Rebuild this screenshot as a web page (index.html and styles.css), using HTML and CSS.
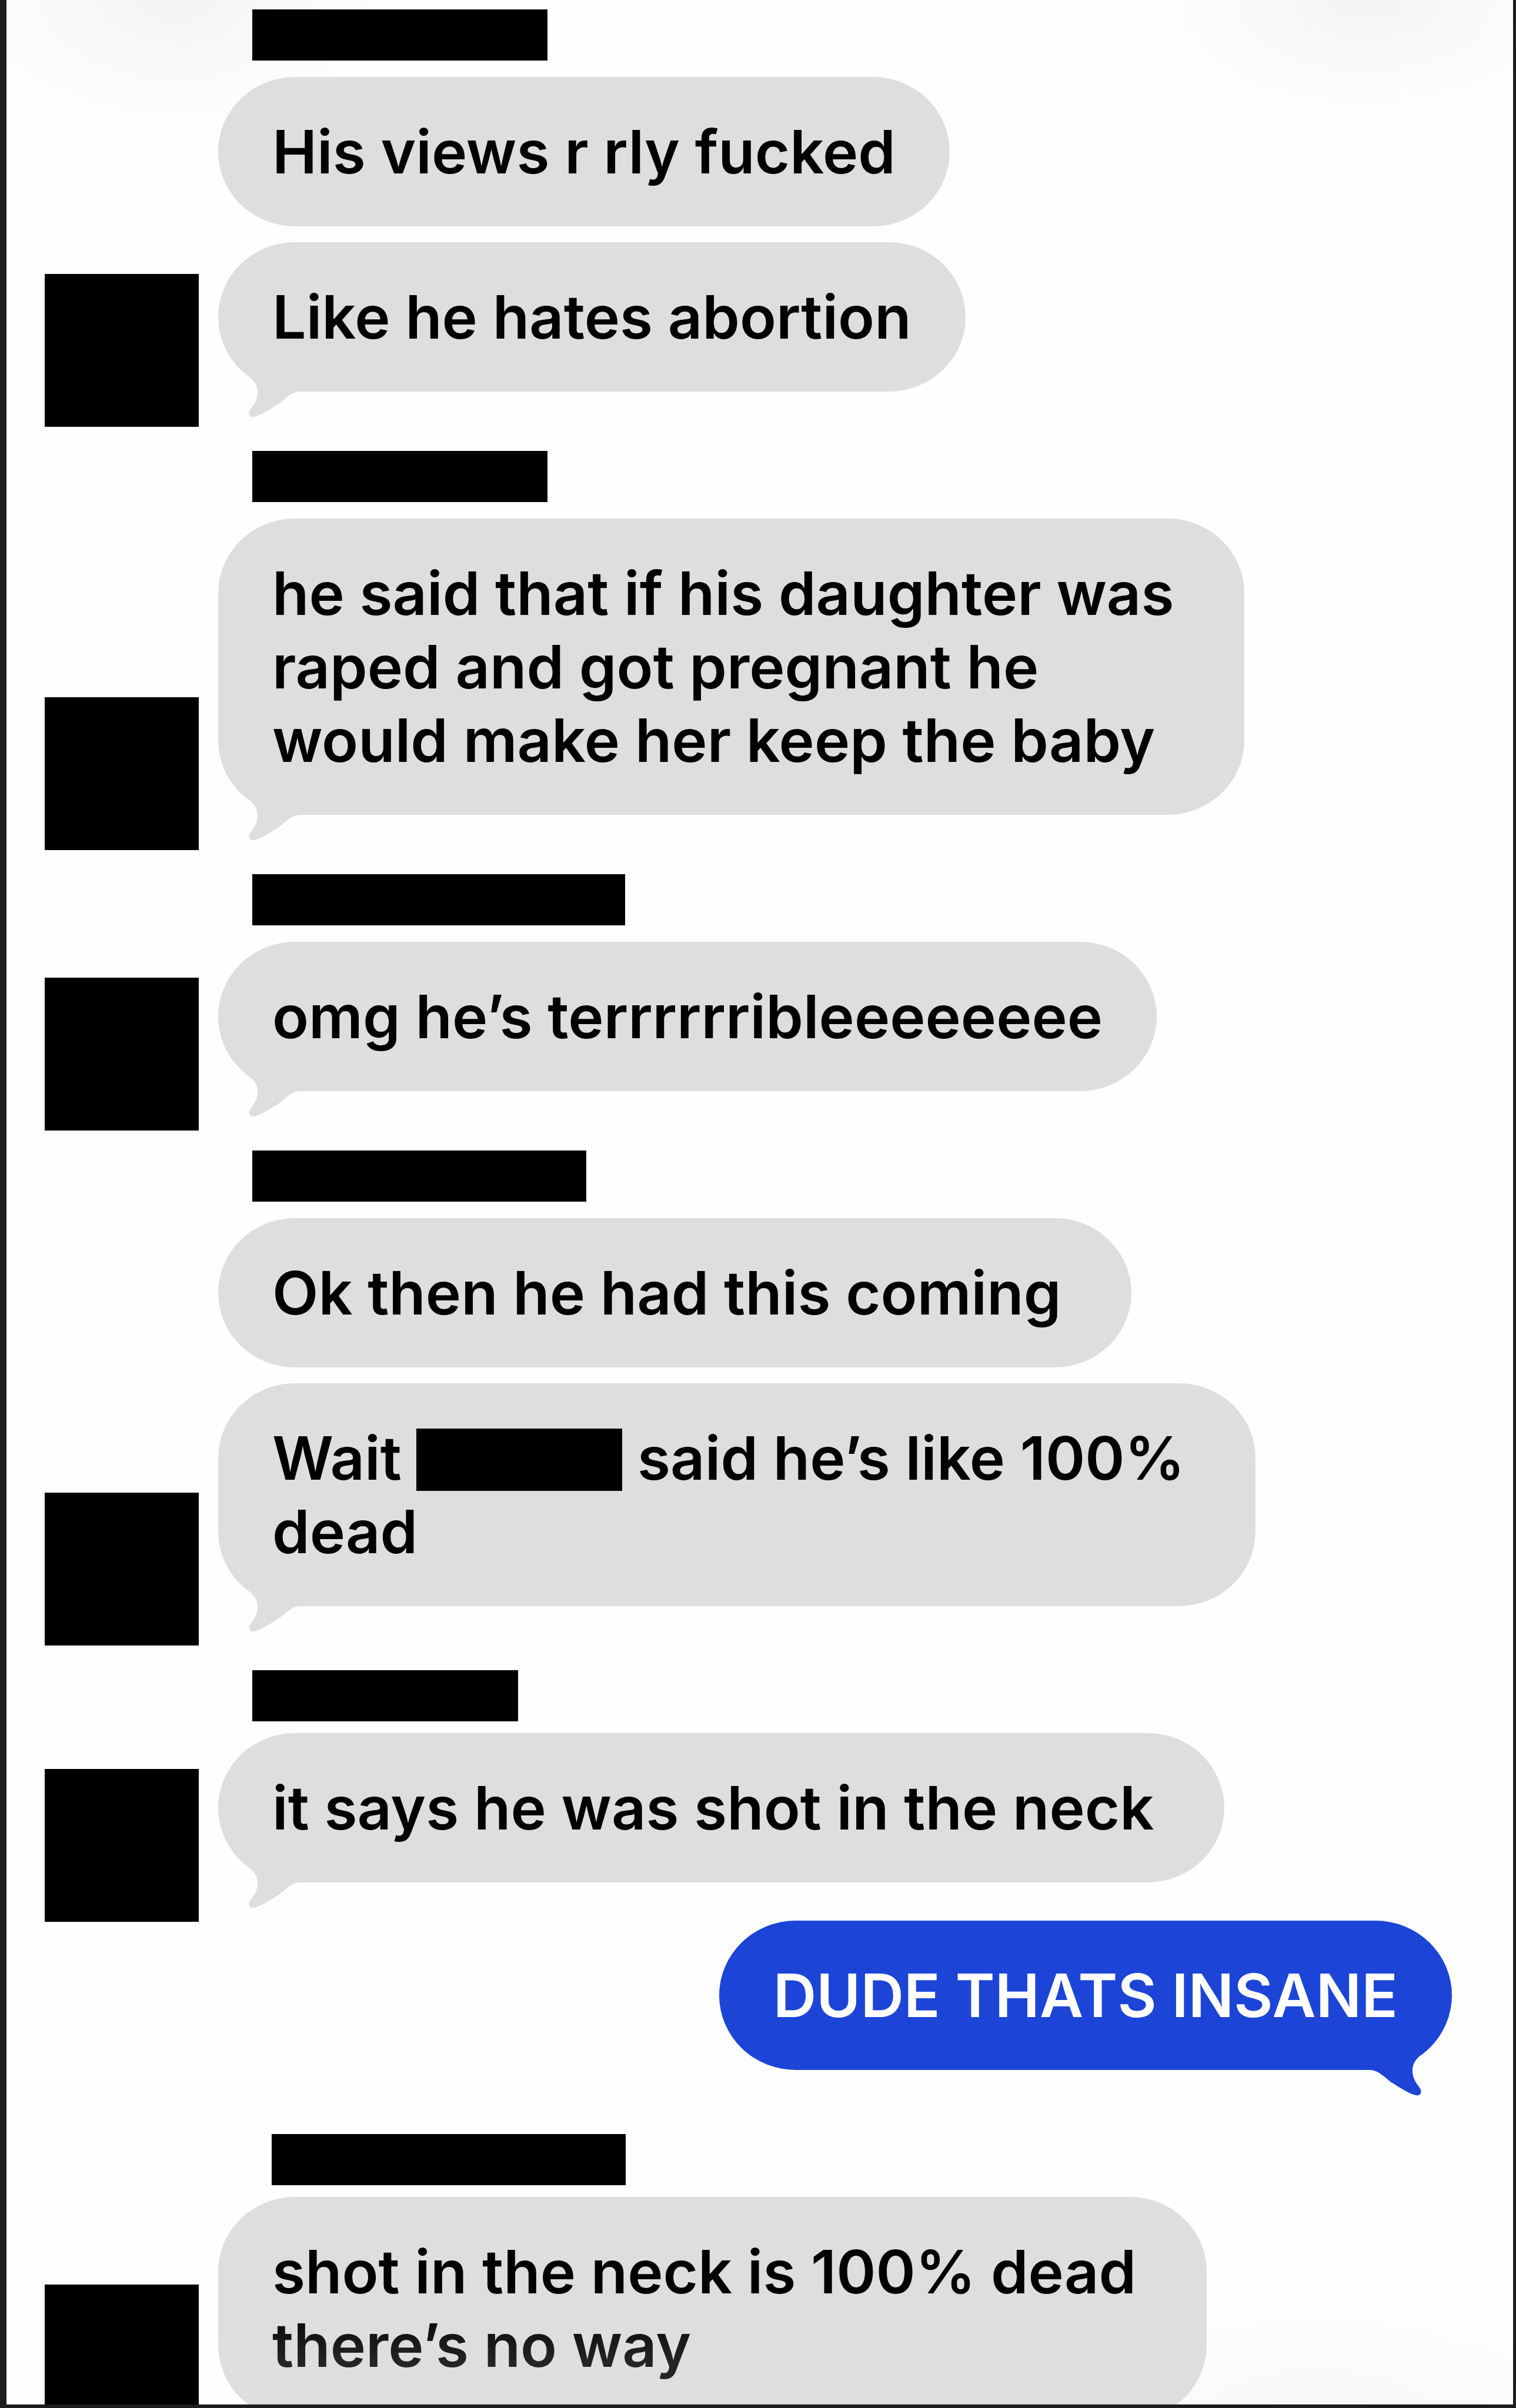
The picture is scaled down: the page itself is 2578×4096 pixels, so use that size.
FILE: index.html
```html
<!DOCTYPE html>
<html lang="en">
<head>
<meta charset="utf-8">
<meta name="viewport" content="width=device-width, initial-scale=1">
<title>Messages</title>
<link rel="stylesheet" href="styles.css">
</head>
<body>
<svg class="symbols" aria-hidden="true">
  <symbol id="tail" viewBox="156 100 700 430">
    <path d="M370 200C425 238 455 280 455 330C455 378 440 412 405 457C380 485 388 522 415 522C470 520 560 455 620 420C680 372 715 330 780 328L840 328L840 200Z"/>
  </symbol>
</svg>
<main class="conversation">
  <section class="group">
    <div class="avatar"></div>
    <div class="messages">
      <div class="name name--medium"></div>
      <p class="bubble">His views r rly fucked</p>
      <p class="bubble">Like he hates abortion<svg class="tail" aria-hidden="true"><use href="#tail"/></svg></p>
    </div>
  </section>
  <section class="group">
    <div class="avatar"></div>
    <div class="messages">
      <div class="name name--medium"></div>
      <p class="bubble bubble--roomy">he said that if his daughter was<br>raped and got pregnant he<br>would make her keep the baby<svg class="tail" aria-hidden="true"><use href="#tail"/></svg></p>
    </div>
  </section>
  <section class="group">
    <div class="avatar avatar--low"></div>
    <div class="messages">
      <div class="name name--long"></div>
      <p class="bubble">omg he’s terrrrrribleeeeeeee<svg class="tail" aria-hidden="true"><use href="#tail"/></svg></p>
    </div>
  </section>
  <section class="group">
    <div class="avatar avatar--low"></div>
    <div class="messages">
      <div class="name name--wide"></div>
      <p class="bubble bubble--roomy">Ok then he had this coming</p>
      <p class="bubble bubble--roomy">Wait <span class="redacted"></span> said he’s like 100%<br>dead<svg class="tail" aria-hidden="true"><use href="#tail"/></svg></p>
    </div>
  </section>
  <section class="group">
    <div class="avatar avatar--low"></div>
    <div class="messages">
      <div class="name name--short name--close"></div>
      <p class="bubble bubble--roomy">it says he was shot in the neck<svg class="tail" aria-hidden="true"><use href="#tail"/></svg></p>
    </div>
  </section>
  <section class="group group--sent">
    <p class="bubble bubble--sent">DUDE THATS INSANE<svg class="tail tail--sent" aria-hidden="true"><use href="#tail"/></svg></p>
  </section>
  <section class="group">
    <div class="avatar avatar--last"></div>
    <div class="messages">
      <div class="name name--indented name--close"></div>
      <p class="bubble bubble--roomy">shot in the neck is 100% dead<br>there’s no way</p>
    </div>
  </section>
</main>
</body>
</html>
```

FILE: styles.css
```css
* {
  box-sizing: border-box;
}

body {
  margin: 0;
  background: #1e1e1e;
  color: #000;
  font-family: Inter, "Liberation Sans", sans-serif;
  font-size: 102px;
  font-weight: 560;
  line-height: 125px;
}

.symbols {
  position: absolute;
  width: 0;
  height: 0;
}

.conversation {
  position: relative;
  display: flex;
  flex-direction: column;
  gap: 101px;
  height: 100vh;
  overflow: hidden;
  padding: 16px 104px 0 65px;
  border: solid #1e1e1e;
  border-width: 0 5px 6px 11px;
  background:
    radial-gradient(ellipse 380px 220px at 290px 0, #f4f4f4, rgba(254, 254, 254, 0)),
    radial-gradient(ellipse 360px 200px at calc(100% - 250px) 0, #f4f4f4, rgba(254, 254, 254, 0)),
    radial-gradient(ellipse 500px 180px at calc(100% - 330px) 100%, #f8f8f8, rgba(254, 254, 254, 0)),
    #fefefe;
}

/* Light veil under the lower toolbar */
.conversation::after {
  content: "";
  position: absolute;
  inset: auto 0 0;
  height: 180px;
  background: linear-gradient(rgba(226, 226, 228, 0), rgba(226, 226, 228, 0.16) 60%);
  mix-blend-mode: lighten;
}

.group {
  display: flex;
  align-items: flex-end;
  flex-shrink: 0;
  gap: 33px;
}

.group--sent {
  justify-content: flex-end;
  margin-top: -36px;
}

.avatar {
  position: relative;
  z-index: 1;
  flex: none;
  width: 262px;
  height: 260px;
  margin-bottom: -60px;
  background: #000;
}

.avatar--low {
  margin-bottom: -67px;
}

.avatar--last {
  margin-bottom: -30px;
}

.messages {
  display: flex;
  flex-direction: column;
  align-items: flex-start;
}

.name {
  height: 87px;
  margin: 0 0 28px 58px;
  background: #000;
}

.name--short { width: 452px; }
.name--medium { width: 502px; }
.name--wide { width: 568px; }
.name--long { width: 634px; }

.name--indented {
  width: 602px;
  margin-left: 91px;
}

.name--close {
  margin-top: 8px;
  margin-bottom: 20px;
}

.bubble {
  position: relative;
  margin: 0;
  padding: 65px 92px 64px;
  border-radius: 130px / 127px;
  background: #dedee0;
  white-space: nowrap;
}

.bubble + .bubble {
  margin-top: 27px;
}

.bubble--roomy {
  padding-right: 120px;
}

.bubble--sent {
  background: #1c45d7;
  color: #fff;
}

.tail {
  position: absolute;
  left: 0;
  bottom: -45px;
  width: 157px;
  height: 96px;
  fill: #dedee0;
}

.tail--sent {
  left: auto;
  right: 0;
  transform: scaleX(-1);
  fill: #1c45d7;
}

.redacted {
  display: inline-block;
  width: 350px;
  height: 106px;
  vertical-align: -19px;
  background: #000;
}
```
